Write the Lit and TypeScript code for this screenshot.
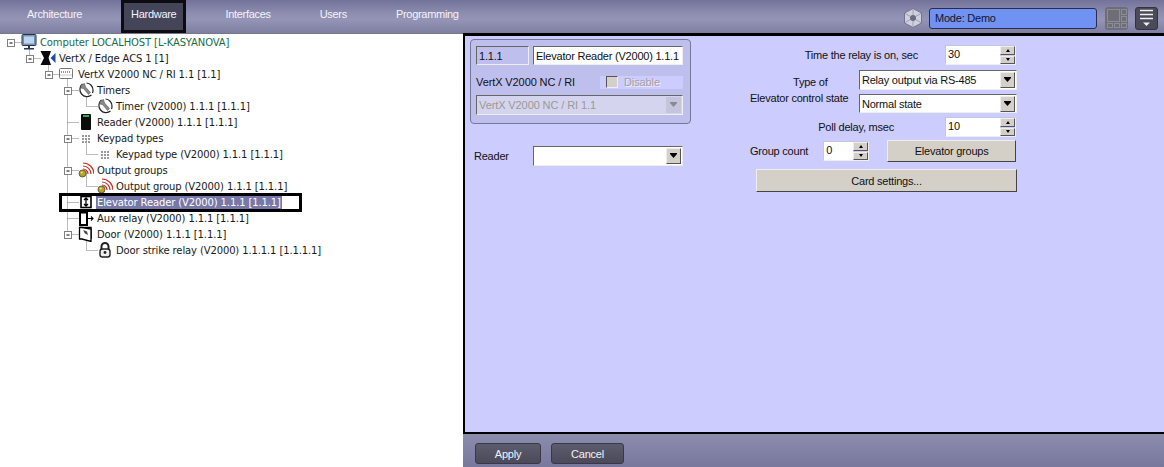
import { LitElement, html, css, svg, nothing } from "lit";
import { customElement } from "lit/decorators.js";

const icons: Record<string, unknown> = {
  computer: svg`<svg width="16" height="16" viewBox="0 0 16 16"><rect x="1" y="0.5" width="14" height="11" rx="1" fill="#8fa3b8" stroke="#1f3550"/><rect x="2.5" y="2" width="11" height="8" fill="#bcd6f0" stroke="#4a6f9c" stroke-width=".6"/><rect x="7" y="12" width="2" height="2" fill="#27384c"/><rect x="3" y="14" width="10" height="1.5" fill="#27384c"/></svg>`,
  vertx: svg`<svg width="16" height="16" viewBox="0 0 16 16"><path d="M0.5 1H11L8.5 8L11 15H0.5L4 8Z" fill="#08080c"/><path d="M15.5 3V13L10.5 8Z" fill="#1f4f9e"/></svg>`,
  board: svg`<svg width="16" height="16" viewBox="0 0 16 16"><rect x="0.5" y="2.5" width="13" height="10" rx="1" fill="#fff" stroke="#777"/><path d="M2 6H12" stroke="#777" stroke-dasharray="1 1" stroke-width="1.4"/><path d="M1 9H13" stroke="#ccc"/></svg>`,
  clock: svg`<svg width="16" height="16" viewBox="0 0 16 16"><path d="M4.5 2A7 7 0 1 0 13.5 13" fill="#fff" stroke="#222" stroke-width="1.2"/><path d="M8.5 1A7 7 0 0 1 15 8A7 7 0 0 1 14.5 11" fill="none" stroke="#222" stroke-width="1.2"/><path d="M3 3L6.5 1.5L7.5 5L12.5 10.5L10.5 12.5L5.5 6.5L2.5 6Z" fill="#8a8a8a" stroke="#444" stroke-width=".5"/></svg>`,
  reader: svg`<svg width="16" height="16" viewBox="0 0 16 16"><rect x="3" y="0" width="10" height="16" rx="1" fill="#0c0c0c"/><rect x="5" y="1" width="6" height="2" fill="#2faa55"/></svg>`,
  keypad: svg`<svg width="16" height="16" viewBox="0 0 16 16"><path d="M5 5V13M8 5V13M11 5V13" stroke="#9a9a9a" stroke-width="2" stroke-dasharray="2 1"/></svg>`,
  output: svg`<svg width="16" height="16" viewBox="0 0 16 16"><g fill="none" stroke="#cc3028" stroke-width="1.2"><path d="M5 7A5 5 0 0 1 10 12"/><path d="M5 4A8 8 0 0 1 13 12"/><path d="M5 1A11 11 0 0 1 16 12"/></g><circle cx="4.5" cy="11.5" r="3.5" fill="#b5a326" stroke="#333" stroke-width=".7"/><circle cx="3.7" cy="10.5" r="1.1" fill="#eee58a"/></svg>`,
  elevator: svg`<svg width="16" height="16" viewBox="0 0 16 16"><rect x="3" y="2.5" width="10" height="11" fill="#fff" stroke="#000" stroke-width="1.6"/><path d="M8 4V12M6 6L8 4L10 6M6 10L8 12L10 10" fill="none" stroke="#000" stroke-width="1.3"/></svg>`,
  aux: svg`<svg width="16" height="16" viewBox="0 0 16 16"><rect x="2" y="2.5" width="7" height="12.5" fill="#fff" stroke="#000" stroke-width="2"/><path d="M10 8.5H15M13 6.5L15 8.5L13 10.5" fill="none" stroke="#000" stroke-width="1.1"/></svg>`,
  door: svg`<svg width="16" height="16" viewBox="0 0 16 16"><path d="M1.5 1.5H13V13" fill="none" stroke="#000" stroke-width="1.4"/><path d="M1.5 1.5L4 1.5L13 3V15.5L4 13H1.5Z" fill="#fff" stroke="#000" stroke-width="1.3"/><path d="M5 4L9 5.5L10 9L7 7.5Z" fill="#444"/></svg>`,
  lock: svg`<svg width="16" height="16" viewBox="0 0 16 16"><path d="M4.5 7V4.5A3.5 3.5 0 0 1 11.5 4.5V7" fill="none" stroke="#222" stroke-width="2"/><rect x="3" y="7" width="10" height="8" rx="2.5" fill="#eee" stroke="#222" stroke-width="1.4"/><circle cx="8" cy="10.5" r="1.4" fill="#222"/></svg>`,
};

type Row = { level: number; icon: string; text: string; exp?: boolean; green?: boolean; sel?: boolean };
const rows: Row[] = [
  { level: 0, icon: "computer", text: "Computer LOCALHOST [L-KASYANOVA]", exp: true, green: true },
  { level: 1, icon: "vertx", text: "VertX / Edge ACS 1 [1]", exp: true },
  { level: 2, icon: "board", text: "VertX V2000 NC / RI 1.1 [1.1]", exp: true },
  { level: 3, icon: "clock", text: "Timers", exp: true },
  { level: 4, icon: "clock", text: "Timer (V2000) 1.1.1 [1.1.1]" },
  { level: 3, icon: "reader", text: "Reader (V2000) 1.1.1 [1.1.1]" },
  { level: 3, icon: "keypad", text: "Keypad types", exp: true },
  { level: 4, icon: "keypad", text: "Keypad type (V2000) 1.1.1 [1.1.1]" },
  { level: 3, icon: "output", text: "Output groups", exp: true },
  { level: 4, icon: "output", text: "Output group (V2000) 1.1.1 [1.1.1]" },
  { level: 3, icon: "elevator", text: "Elevator Reader (V2000) 1.1.1 [1.1.1]", sel: true },
  { level: 3, icon: "aux", text: "Aux relay (V2000) 1.1.1 [1.1.1]" },
  { level: 3, icon: "door", text: "Door (V2000) 1.1.1 [1.1.1]", exp: true },
  { level: 4, icon: "lock", text: "Door strike relay (V2000) 1.1.1.1 [1.1.1.1]" },
];

const arrow = html`<svg width="9" height="6" viewBox="0 0 9 6"><path d="M1 0H8V1L4.5 5L1 1Z" fill="#000"/></svg>`;
const grayArrow = html`<svg width="9" height="6" viewBox="0 0 9 6"><path d="M1 0H8V1L4.5 5L1 1Z" fill="#8a8a8a"/></svg>`;

@customElement("app-root")
export class AppRoot extends LitElement {
  static styles = css`
    :host { display: block; width: 1164px; height: 467px; overflow: hidden; background: #fff; font-family: "Liberation Sans", Arial, sans-serif; font-size: 11px; letter-spacing: -.22px; color: #111; }
    .top { height: 33px; display: flex; align-items: stretch; background: linear-gradient(#73739a 0, #8d8db0 40%, #9494b6 60%, #7e7ea0 100%); color: #f4f4fa; }
    .tabs { display: flex; gap: 29px; padding-left: 17px; }
    .tab { padding: 0 10px 5px; font-size: 11px; letter-spacing: -.3px; display: flex; align-items: center; box-sizing: border-box; }
    .tab.on { background: #45455a; box-shadow: inset 0 0 0 3px #0c0c10; }
    .status { margin-left: auto; display: flex; align-items: center; padding: 3px 6px 0 0; }
    .hex { margin-right: 6px; display: flex; }
    .mode { box-sizing: border-box; width: 168px; height: 21px; background: #7092f2; border: 1px solid #2b2b52; border-radius: 3px; color: #14142c; font-size: 11px; padding-left: 5px; display: flex; align-items: center; margin-right: 8px; }
    .tool { width: 23px; height: 23px; border-radius: 3px; display: flex; align-items: center; justify-content: center; box-sizing: border-box; }
    .tool.off { background: #6e6e78; margin-right: 7px; }
    .tool.menu { background: #4a4a58; border: 1px solid #33333f; }
    .main { display: flex; height: 434px; }
    .tree { position: relative; width: 463px; flex: none; box-sizing: border-box; border-top: 1px solid #77778c; font-family: "DejaVu Sans", sans-serif; font-size: 10px; letter-spacing: -.12px; color: #1a1a1a; }
    .lines { position: absolute; left: 0; top: 0; pointer-events: none; }
    .row { height: 16px; display: flex; align-items: center; position: relative; }
    .row .ic { width: 16px; height: 16px; display: flex; flex: none; }
    .row .tx { margin-left: 2px; padding: 0 1px; white-space: nowrap; line-height: 15px; }
    .row .green { color: #1c6b46; }
    .row .sel { background: #7777a8; color: #fff; }
    .mark { position: absolute; left: 59px; top: 159px; width: 243px; height: 19px; box-sizing: border-box; border: 3px solid #000; pointer-events: none; }
    .side { flex: 1; display: flex; flex-direction: column; }
    .panel { box-sizing: border-box; height: 401px; background: #ccccff; border: 3px solid #000; border-right: 0; border-bottom-width: 2px; border-left-width: 2px; display: flex; padding: 3px 0 0 5px; }
    .left { width: 280px; flex: none; }
    .card { box-sizing: border-box; width: 221px; height: 85px; border: 1px solid #77779a; border-radius: 4px; background: #bfbfee; padding: 6px 7px 0 5px; }
    .c1 { display: flex; justify-content: space-between; }
    .sunk { box-sizing: border-box; height: 19px; border: 1px solid; border-color: #666 #eee #eee #666; display: flex; align-items: center; padding-left: 2px; white-space: nowrap; overflow: hidden; }
    .idf { width: 53px; }
    .namef { width: 150px; background: #fff; }
    .c2 { display: flex; align-items: center; justify-content: space-between; margin-top: 9px; height: 16px; letter-spacing: -.1px; }
    .dis { width: 83px; height: 13px; background: #ccccff; display: flex; align-items: center; color: #a0a0a8; text-shadow: 1px 1px 0 #eeeeff; gap: 6px; padding-left: 6px; box-sizing: border-box; }
    .cb { box-sizing: border-box; width: 12px; height: 12px; background: #d4d0c8; border: 1px solid; border-color: #555 #eee #eee #555; }
    .sel-box { box-sizing: border-box; height: 20px; border: 1px solid; border-color: #666 #eee #eee #666; background: #fff; display: flex; align-items: center; padding-left: 2px; white-space: nowrap; }
    .sel-box .val { flex: 1; }
    .drop { flex: none; width: 15px; height: 16px; margin-right: 1px; background: #d4d0c8; border: 1px solid; border-color: #eee #555 #555 #eee; box-sizing: border-box; display: flex; align-items: center; justify-content: center; }
    .c3 { margin-top: 5px; background: #d4d4ee; color: #999; letter-spacing: -.1px; }
    .c3 .drop { background: #c4c4dc; border-color: transparent; }
    .rd { display: flex; align-items: center; margin-top: 22px; padding-left: 4px; }
    .rd .lab { width: 59px; }
    .rd .sel-box { width: 150px; }
    .right { width: 267px; display: flex; flex-direction: column; padding-top: 6px; }
    .r { display: flex; align-items: center; white-space: nowrap; }
    .end { justify-content: flex-end; padding-right: 1px; }
    .l1 { margin-right: 27px; }
    .l2 { margin: 4px 0 0 43px; }
    .l3 { margin: -6px 0 5px; }
    .l4 { margin-right: 51px; }
    .l5 { margin-right: 15px; }
    .spin { display: flex; height: 20px; background: #fff; box-sizing: border-box; border: 1px solid; border-color: #c4c4e8 #eee #eee #c4c4e8; flex: none; }
    .spin .v { flex: 1; padding: 0 0 2px 2px; display: flex; align-items: center; }
    .arrows { width: 15px; display: flex; flex-direction: column; background: #ccccff; gap: 1px; }
    .arrows i { flex: 1; background: #d4d0c8; border: 1px solid; border-color: #eee #555 #555 #eee; box-sizing: border-box; display: flex; align-items: center; justify-content: center; }
    .tri-u { width: 0; height: 0; border: 2px solid transparent; border-top: 0; border-bottom: 3px solid #000; }
    .tri-d { width: 0; height: 0; border: 2px solid transparent; border-bottom: 0; border-top: 3px solid #000; }
    .s72 { width: 71px; }
    .s46 { width: 46px; }
    .pick { width: 158px; margin-left: auto; }
    .h19 { height: 19px; }
    .mt5 { margin-top: 5px; }
    .mt4 { margin-top: 4px; }
    .mt3 { margin-top: 3px; }
    .btn { box-sizing: border-box; background: #d4d0c8; border: 1px solid; border-color: #eee #444 #444 #eee; display: flex; align-items: center; justify-content: center; flex: none; }
    .eg { width: 129px; height: 22px; margin-left: 18px; }
    .cs { width: 261px; height: 23px; margin: 7px 0 0 6px; }
    .foot { flex: 1; background: linear-gradient(#8c8cae, #78789c); display: flex; gap: 10px; padding: 9px 0 0 12px; }
    .fb { box-sizing: border-box; height: 21px; border-radius: 3px; background: linear-gradient(#5c5c6e, #4a4a5a); border: 1px solid #38384a; color: #f2f2f8; display: flex; align-items: center; justify-content: center; }
    .apply { width: 66px; }
    .cancel { width: 73px; }
  `;

  private spin(v: string, cls: string) {
    return html`<div class="spin ${cls}"><div class="v">${v}</div><div class="arrows"><i><b class="tri-u"></b></i><i><b class="tri-d"></b></i></div></div>`;
  }

  private lines() {
    const xs = [10.5, 29.5, 48.5, 67.5, 86.5];
    const y = (i: number) => 8.5 + i * 16;
    const segs: string[] = [];
    rows.forEach((r, i) => {
      segs.push(`M${xs[r.level]} ${y(i)}H${xs[r.level] + 11}`);
    });
    const v = (lv: number, a: number, b: number) => `M${xs[lv]} ${y(a)}V${y(b)}`;
    segs.push(v(1, 0, 1), v(2, 1, 2), v(3, 2, 12), v(4, 3, 4), v(4, 6, 7), v(4, 8, 9), v(4, 12, 13));
    const boxes = rows.map((r, i) => {
      if (!r.exp) return nothing;
      const cx = xs[r.level];
      const cy = y(i);
      return svg`<g><rect x="${cx - 3}" y="${cy - 3}" width="7" height="7" fill="#fff" stroke="#808080"/><path d="M${cx - 1} ${cy + 0.5}H${cx + 2}" stroke="#000"/></g>`;
    });
    return html`<svg class="lines" width="120" height="270"><path d="${segs.join("")}" fill="none" stroke="#777" stroke-dasharray="1 1"/>${boxes}</svg>`;
  }

  render() {
    return html`
      <div class="top">
        <div class="tabs">
          <div class="tab">Architecture</div><div class="tab on">Hardware</div><div class="tab">Interfaces</div><div class="tab">Users</div><div class="tab">Programming</div>
        </div>
        <div class="status">
          <div class="hex"><svg width="20" height="20" viewBox="0 0 20 20"><path d="M10 .5L18.5 5V15L10 19.5L1.5 15V5Z" fill="#cfcfdd" stroke="#74748c"/><path d="M10 1V7M18 5.5L12.5 8.5M18 14.5L12.5 11.5M10 19V13M2 14.5L7.5 11.5M2 5.5L7.5 8.5" stroke="#a0a0b4"/><circle cx="10" cy="10" r="3" fill="#6a6a80"/></svg></div>
          <div class="mode">Mode: Demo</div>
          <div class="tool off"><svg width="20" height="19" viewBox="0 0 20 19"><g fill="none" stroke="#8c8c94"><rect x=".5" y=".5" width="12" height="12"/><rect x="14.5" y=".5" width="5" height="5"/><rect x="14.5" y="7.5" width="5" height="5"/><rect x=".5" y="14.5" width="5" height="4"/><rect x="7.5" y="14.5" width="5" height="4"/><rect x="14.5" y="14.5" width="5" height="4"/></g></svg></div>
          <div class="tool menu"><svg width="15" height="18" viewBox="0 0 15 18"><path d="M1 1.5H14M1 5.5H14M1 9.5H14" stroke="#f0f0f0" stroke-width="1.6"/><path d="M4 13.5H11L7.5 17Z" fill="#f0f0f0"/></svg></div>
        </div>
      </div>
      <div class="main">
        <div class="tree">
          ${this.lines()}
          ${rows.map((r) => html`<div class="row" style="padding-left:${21 + r.level * 19}px">
            <span class="ic">${icons[r.icon]}</span>
            <span class="tx ${r.green ? "green" : ""} ${r.sel ? "sel" : ""}">${r.text}</span>
          </div>`)}
          <div class="mark"></div>
        </div>
        <div class="side">
          <div class="panel">
            <div class="left">
              <div class="card">
                <div class="c1"><div class="sunk idf">1.1.1</div><div class="sunk namef">Elevator Reader (V2000) 1.1.1</div></div>
                <div class="c2"><span>VertX V2000 NC / RI</span><div class="dis"><span class="cb"></span>Disable</div></div>
                <div class="sel-box c3"><span class="val">VertX V2000 NC / RI 1.1</span><span class="drop">${grayArrow}</span></div>
              </div>
              <div class="rd"><span class="lab">Reader</span><div class="sel-box"><span class="val"></span><span class="drop">${arrow}</span></div></div>
            </div>
            <div class="right">
              <div class="r end"><span class="l1">Time the relay is on, sec</span>${this.spin("30", "s72")}</div>
              <div class="r mt5"><span class="l2">Type of</span><div class="sel-box pick"><span class="val">Relay output via RS-485</span><span class="drop">${arrow}</span></div></div>
              <div class="r mt4"><span class="l3">Elevator control state</span><div class="sel-box pick h19"><span class="val">Normal state</span><span class="drop">${arrow}</span></div></div>
              <div class="r end mt4"><span class="l4">Poll delay, msec</span>${this.spin("10", "s72")}</div>
              <div class="r mt3"><span class="l5">Group count</span>${this.spin("0", "s46")}<div class="btn eg">Elevator groups</div></div>
              <div class="btn cs">Card settings...</div>
            </div>
          </div>
          <div class="foot"><div class="fb apply">Apply</div><div class="fb cancel">Cancel</div></div>
        </div>
      </div>
    `;
  }
}
